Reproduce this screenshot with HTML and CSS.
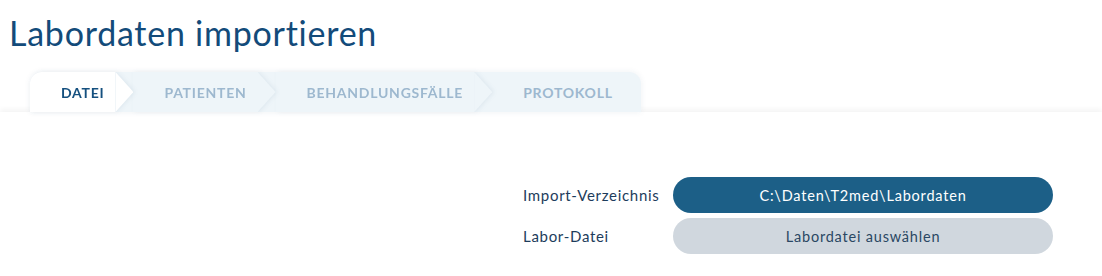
FILE: index.html
```html
<!DOCTYPE html>
<html>
<head>
    <title>Labordaten importieren</title>
    <link rel="stylesheet" href="styles.css">
</head>
<body>
    <h1 class="page-title">Labordaten importieren</h1>

    <div class="steps">
        <div class="step active">Datei</div>
        <div class="step">Patienten</div>
        <div class="step">Behandlungsfälle</div>
        <div class="step last">Protokoll</div>
    </div>

    <div class="panel">
        <div class="form">
            <label class="form-label">Import-Verzeichnis</label>
            <button class="pill pill-primary">C:\Daten\T2med\Labordaten</button>

            <label class="form-label">Labor-Datei</label>
            <button class="pill pill-muted">Labordatei auswählen</button>
        </div>
    </div>
</body>
</html>
```

FILE: styles.css
```css
body {
    margin: 0;
    font-family: Lato, "Open Sans", Arial, sans-serif;
    background: #fff;
    color: #1d3c5c;
}

.page-title {
    margin: 0;
    padding: 12px 0 0 9px;
    height: 60px;
    box-sizing: border-box;
    font-size: 34px;
    font-weight: 400;
    color: #134b7a;
    letter-spacing: 0.75px;
}

/* wizard steps */
.steps {
    display: flex;
    margin: 12px 0 0 30px;
    width: 611px;
    height: 40px;
    background: #eef5f9;
    border-radius: 12px 12px 0 0;
    box-shadow: 0 0 6px rgba(40, 80, 120, 0.08);
    position: relative;
    z-index: 2;
}
.step {
    position: relative;
    display: flex;
    align-items: center;
    padding: 0 11px 0 31px;
    margin-right: 18px;
    font-size: 14px;
    font-weight: 700;
    letter-spacing: 0.75px;
    text-transform: uppercase;
    color: #9db8cf;
    background: #eef5f9;
    filter: drop-shadow(2px 0 2px rgba(30, 70, 110, 0.07));
}
.step:nth-child(1) { z-index: 4; }
.step:nth-child(2) { z-index: 3; }
.step:nth-child(3) { z-index: 2; }
.step::after {
    content: "";
    position: absolute;
    top: 0;
    right: -18px;
    width: 18px;
    height: 100%;
    background: inherit;
    clip-path: polygon(0 0, 100% 50%, 0 100%);
}
.step.active {
    background: #fff;
    color: #15507f;
    border-top-left-radius: 12px;
}
.step.last {
    margin-right: 0;
    filter: none;
    border-top-right-radius: 12px;
}
.step.last::after { display: none; }

/* content */
.panel {
    position: relative;
    z-index: 1;
    background: #fff;
    box-shadow: 0 -3px 5px rgba(0, 0, 0, 0.045);
    padding: 65px 49px 20px 0;
    display: flex;
    justify-content: flex-end;
}
.form {
    display: grid;
    grid-template-columns: 150px 380px;
    row-gap: 5px;
    align-items: center;
}
.form-label {
    font-size: 15px;
    letter-spacing: 0.7px;
    color: #1d3c5c;
}
.pill {
    height: 36px;
    border: none;
    border-radius: 18px;
    font-family: inherit;
    font-size: 14.5px;
    letter-spacing: 0.8px;
    padding: 0 16px;
}
.pill-primary {
    background: #1c5f87;
    color: #fff;
}
.pill-muted {
    background: #d0d7de;
    color: #2a4763;
}
```
